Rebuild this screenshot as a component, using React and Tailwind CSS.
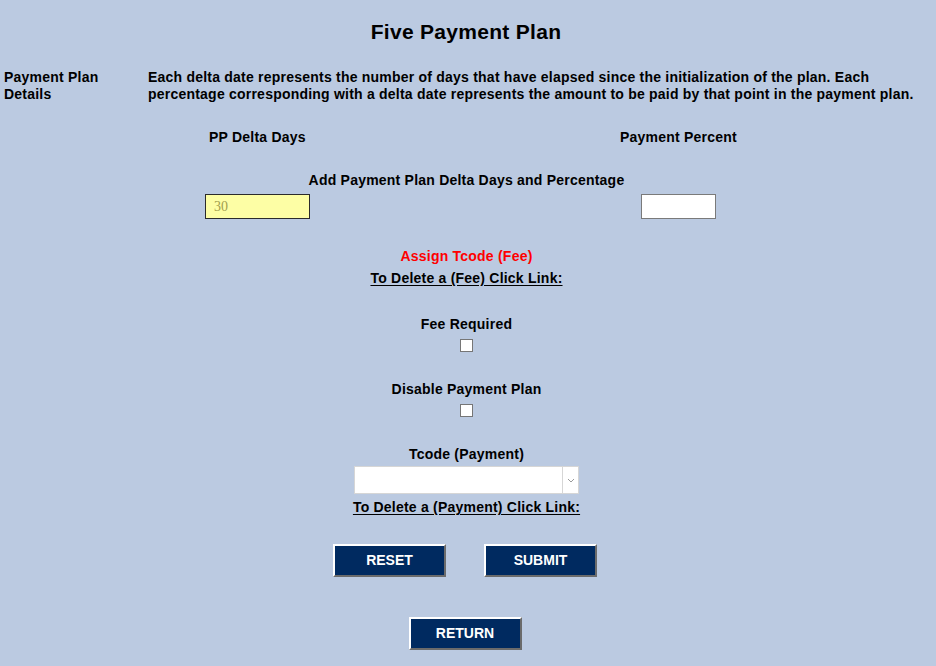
import React from "react";

const font = { fontFamily: '"Liberation Sans", Arial, sans-serif' };

function NavyButton({ children }) {
  return (
    <button
      type="button"
      className="h-[33px] w-[113px] bg-[#002a60] border-2 border-t-white border-l-white border-r-[#6b6b6b] border-b-[#6b6b6b] text-white text-[14px] tracking-normal font-bold"
    >
      {children}
    </button>
  );
}

export default function App() {
  return (
    <div
      className="min-h-[666px] w-full bg-[#bbcae1] text-black text-[14px] tracking-[0.22px] font-bold"
      style={font}
    >
      <h1 className="pt-[19px] pr-[4px] text-center text-[21px] tracking-[0.3px] font-bold leading-[25px]">
        Five Payment Plan
      </h1>

      {/* plan description */}
      <div className="mt-[25px] flex leading-[17px]">
        <div className="w-[148px] pl-[4px] shrink-0">
          Payment Plan
          <br />
          Details
        </div>
        <div className="whitespace-nowrap">
          Each delta date represents the number of days that have elapsed since the initialization of the plan. Each
          <br />
          percentage corresponding with a delta date represents the amount to be paid by that point in the payment plan.
        </div>
      </div>

      {/* column headings */}
      <div className="mt-[26px] grid grid-cols-[467px_1fr] leading-[17px]">
        <div className="pl-[209px]">PP Delta Days</div>
        <div className="pl-[153px]">Payment Percent</div>
      </div>

      <div className="mt-[26px] pr-[3px] text-center leading-[17px]">
        Add Payment Plan Delta Days and Percentage
      </div>

      <div className="mt-[5px] flex items-start">
        <input
          type="text"
          defaultValue="30"
          className="ml-[205px] h-[25px] w-[105px] border border-[#2b2b2b] bg-[#fdfea5] px-[8px] text-[14px] font-normal tracking-normal text-[#a29f4e] outline-none"
          style={{ fontFamily: '"Liberation Serif", "Times New Roman", serif' }}
        />
        <input
          type="text"
          className="ml-[331px] h-[25px] w-[75px] border border-[#7a7a7a] bg-white outline-none"
        />
      </div>

      <div className="mt-[29px] pr-[3px] flex flex-col items-center leading-[17px]">
        <div className="text-[#ff0000]">Assign Tcode (Fee)</div>
        <div className="mt-[5px] underline underline-offset-2">To Delete a (Fee) Click Link:</div>

        <div className="mt-[29px]">Fee Required</div>
        <div className="mt-[6px] h-[13px] w-[13px] border border-[#767676] bg-white" />

        <div className="mt-[29px]">Disable Payment Plan</div>
        <div className="mt-[6px] h-[13px] w-[13px] border border-[#767676] bg-white" />

        <div className="mt-[29px]">Tcode (Payment)</div>
        <div className="mt-[3px] flex h-[28px] w-[225px] border border-[#d6d6d6] bg-white">
          <div className="flex-1" />
          <div className="flex w-[16px] items-center justify-center border-l border-[#d6d6d6]">
            <svg width="8" height="5" viewBox="0 0 8 5">
              <path d="M1 1 L4 4 L7 1" fill="none" stroke="#9a9a9a" strokeWidth="1" />
            </svg>
          </div>
        </div>
        <div className="mt-[5px] underline underline-offset-2">To Delete a (Payment) Click Link:</div>
      </div>

      <div className="mt-[28px] pr-[6px] flex justify-center gap-[38px]">
        <NavyButton>RESET</NavyButton>
        <NavyButton>SUBMIT</NavyButton>
      </div>

      <div className="mt-[40px] pr-[6px] flex justify-center">
        <NavyButton>RETURN</NavyButton>
      </div>
    </div>
  );
}
